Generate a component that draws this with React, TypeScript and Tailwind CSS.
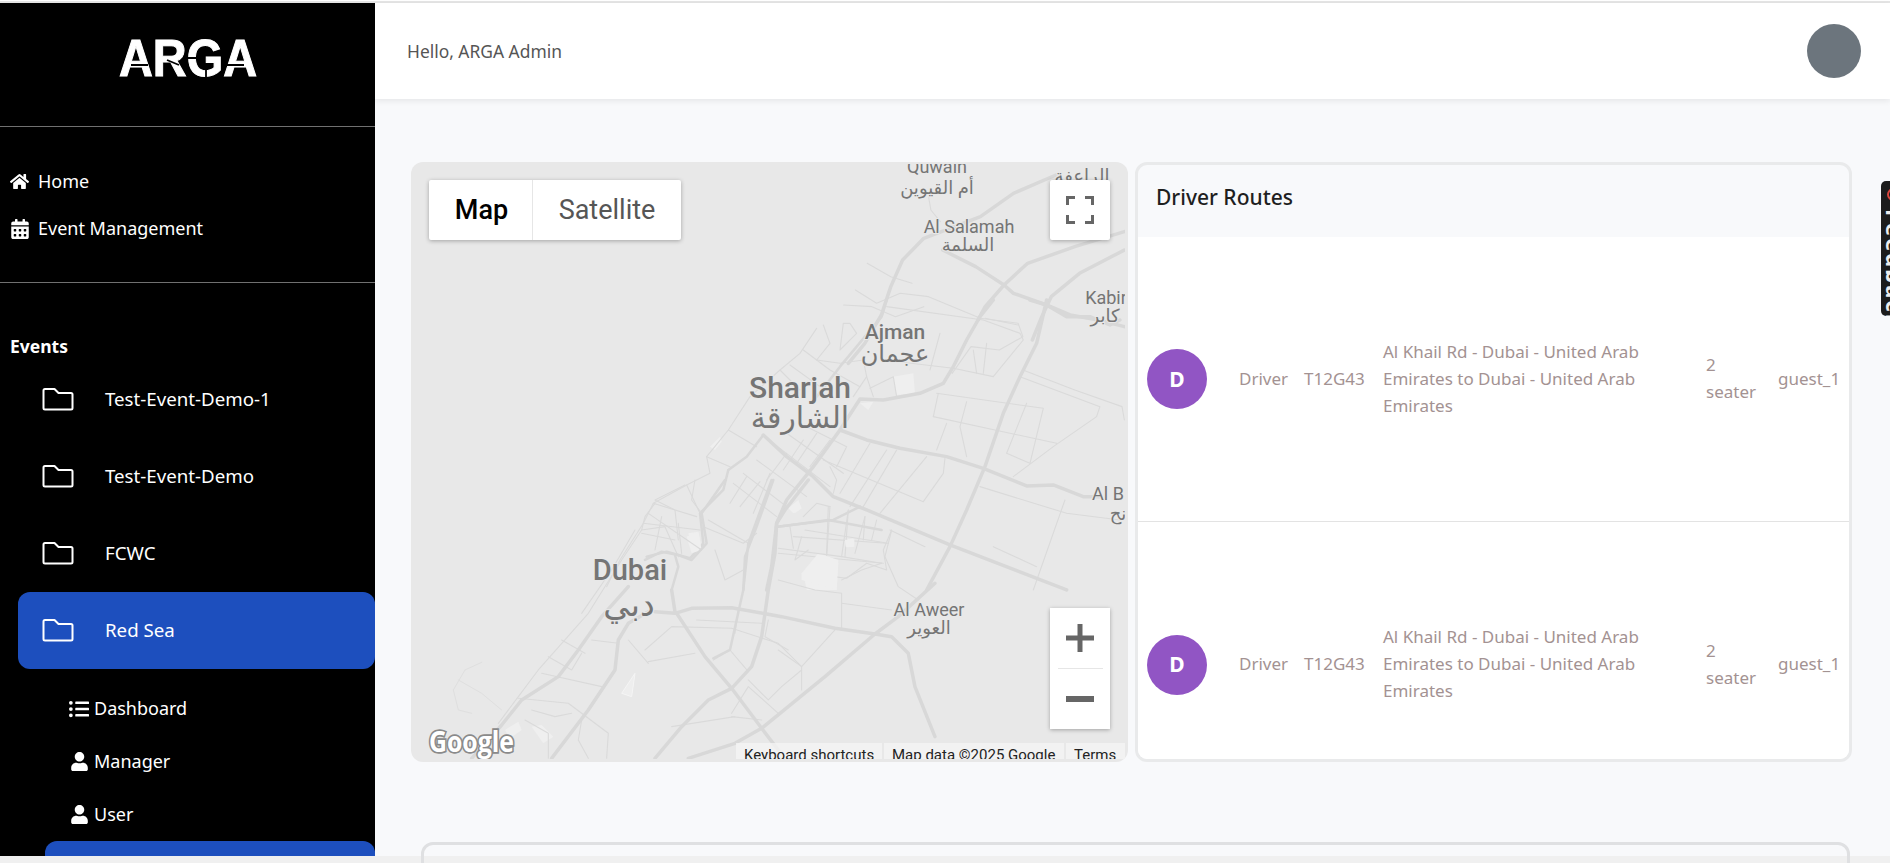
import React from "react";
import { FaHome, FaCalendarAlt, FaListUl, FaUser } from "react-icons/fa";

const Folder = () => (
  <svg width="32" height="24" viewBox="0 0 32 24" fill="none" className="shrink-0">
    <path d="M3 2h9.5l4 4H29a1.5 1.5 0 0 1 1.500 1.500V21a1.500 1.500 0 0 1-1.500 1.500H3A1.500 1.500 0 0 1 1.500 21V3.500A1.500 1.500 0 0 1 3 2z" stroke="#fff" strokeWidth="2" strokeLinejoin="round" />
  </svg>
);

const pts = (a: number[][]) => a.map((p) => p.join(",")).join(" ");

const outerA: number[][][] = [
  [[1390,75],[1300,130],[1230,200],[1110,265],[1065,330],[1040,410],[1020,495],[985,580],[950,640]],
  [[1150,300],[1220,350],[1280,405],[1300,430],[1370,465],[1420,495],[1480,510],[1535,530]],
  [[1535,245],[1430,290],[1330,340],[1280,405],[1240,470],[1225,510]],
  [[1535,300],[1440,370],[1380,440],[1360,500],[1340,570]],
];
const outerThin: number[][][] = [
  [[1120,140],[1125,180],[1145,215]],
  [[990,340],[1040,380],[1085,400]],
  [[965,420],[1010,460],[1060,430],[1120,440],[1230,505],[1310,520],[1320,560],[1270,600],[1210,590],[1170,670]],
  [[940,465],[1000,470],[1050,500],[1110,470]],
  [[1240,505],[1310,525]],
  [[1320,660],[1430,720],[1530,770],[1535,810]],
];
const g8major: number[][][] = [
  [[1340,0],[1310,130],[1260,230],[1210,340],[1155,500],[1100,630],[1050,740],[980,870]],
  [[1180,0],[1140,50],[1100,120],[1060,200],[1030,250],[960,280],[850,300],[780,297],[720,390],[640,500],[560,600],[530,670],[515,800],[500,870]],
  [[720,390],[800,420],[900,445],[1040,470],[1150,505],[1280,558],[1360,555],[1450,590],[1500,590]],
  [[490,405],[560,470],[640,530],[700,590],[800,630],[1050,735],[1400,870]],
  [[1290,0],[1340,15],[1400,50],[1470,50],[1530,75],[1560,60]],
];
const g8mid: number[][][] = [
  [[860,0],[845,50],[770,140],[720,200],[650,290]],
  [[520,540],[470,680],[435,770],[430,870]],
  [[385,510],[370,570],[300,640],[310,730],[270,775],[200,755],[140,770]],
  [[385,510],[440,470],[490,405]],
  [[530,680],[700,660],[780,620]],
];
const g8thin: number[][][] = [
  [[650,85],[600,160],[540,210],[450,290],[385,390],[320,470],[330,520],[260,555],[160,610],[130,670],[60,780],[20,860]],
  [[670,75],[690,130],[650,180],[720,190],[790,180],[800,230],[760,290]],
  [[730,70],[720,150],[770,100],[750,70],[730,70]],
  [[610,150],[690,210],[780,260]],
  [[570,195],[660,260]],
  [[540,210],[600,270]],
  [[385,390],[470,440]],
  [[320,470],[390,500]],
  [[260,555],[300,640]],
  [[160,610],[290,650]],
  [[130,670],[300,690]],
  [[310,680],[430,730],[470,700]],
  [[400,550],[530,650]],
  [[430,520],[560,620]],
  [[470,480],[620,590]],
  [[520,430],[690,560]],
  [[560,400],[730,520]],
  [[620,380],[740,440],[710,500]],
  [[440,530],[390,610]],
  [[480,545],[420,620]],
  [[510,520],[460,640]],
  [[560,460],[500,540]],
  [[610,420],[550,510]],
  [[650,400],[590,490]],
  [[690,420],[630,500]],
  [[690,500],[710,540],[700,580]],
  [[810,430],[720,580]],
  [[860,450],[750,620]],
  [[890,450],[790,620]],
  [[980,470],[840,640]],
  [[1035,475],[1030,520],[970,605]],
  [[670,480],[970,605]],
  [[570,680],[580,745]],
  [[690,620],[680,770]],
  [[745,630],[735,770]],
  [[795,650],[790,720]],
  [[830,660],[815,720]],
  [[580,710],[860,730]],
  [[535,760],[850,790]],
  [[610,650],[650,610],[690,620]],
  [[875,690],[850,750],[860,810],[800,790],[740,835],[700,830]],
  [[870,690],[975,740]],
  [[800,230],[820,290]],
  [[810,265],[880,230],[890,290]],
  [[1020,100],[990,210]],
  [[860,20],[1150,60],[1260,100],[1270,120],[1180,230],[1060,205],[850,180]],
  [[1120,150],[1130,220]],
  [[1160,130],[1150,220]],
  [[1010,280],[1330,325],[1290,490]],
  [[1100,305],[1080,380],[1100,470]],
  [[1000,350],[1370,430]],
  [[1015,280],[1000,350]],
  [[1280,310],[1220,460],[1290,490]],
  [[1260,230],[1500,320],[1490,350],[1360,440],[1240,530]],
  [[1140,560],[1400,640],[1560,660]],
  [[1395,600],[1300,870]],
  [[1180,740],[1310,800]],
  [[1040,370],[1010,450]],
];
const g9major: number[][][] = [
  [[1180,0],[1110,90],[1085,130],[1080,220],[1060,330],[1040,470],[1010,560],[950,625],[880,660],[800,740],[720,835]],
  [[720,395],[780,400],[830,385],[950,383],[1100,410],[1260,445],[1380,462],[1430,470],[1480,520],[1500,620],[1560,770]],
  [[785,400],[870,530],[950,625],[1040,745],[1090,810]],
  [[770,330],[780,395]],
  [[700,395],[640,430],[610,480],[600,570],[520,690],[410,835]],
  [[640,320],[560,410],[490,510],[430,590],[320,660],[260,735],[170,835]],
  [[1560,310],[1450,410],[1380,462],[1230,590],[1040,745],[960,790],[820,835]],
];
const g9mid: number[][][] = [
  [[1070,0],[1000,190],[985,330],[945,510],[895,535]],
  [[930,0],[860,100],[875,190],[830,240],[790,225],[740,215],[690,240]],
  [[770,330],[790,260],[780,225]],
  [[1090,140],[1240,120],[1400,150]],
];
const g9thin: number[][][] = [
  [[680,150],[620,240],[520,400],[370,570],[310,650],[250,730]],
  [[660,150],[590,270],[500,400]],
  [[720,70],[690,110],[680,150],[750,140],[790,230]],
  [[810,15],[720,60],[780,90],[790,180]],
  [[840,0],[830,60],[860,100]],
  [[700,100],[860,210]],
  [[680,160],[780,180]],
  [[740,110],[720,210]],
  [[790,130],[800,220]],
  [[440,480],[510,520]],
  [[400,530],[470,570],[500,520]],
  [[380,580],[560,620]],
  [[310,655],[460,670],[580,760],[575,835]],
  [[350,690],[420,710],[470,700]],
  [[330,720],[400,760],[400,835]],
  [[500,720],[490,780],[520,835]],
  [[530,480],[610,490]],
  [[640,480],[700,550]],
  [[690,510],[770,440],[950,445],[1090,490],[1160,560],[1160,630]],
  [[700,545],[840,520]],
  [[845,420],[1040,430]],
  [[970,390],[960,460]],
  [[1060,420],[1050,470],[1120,510]],
  [[895,540],[945,510],[1000,575]],
  [[1090,510],[1160,560],[1260,450]],
  [[1090,300],[1200,330],[1280,340],[1280,450]],
  [[1280,370],[1430,390]],
  [[1090,205],[1280,230],[1400,250]],
  [[1160,170],[1140,240],[1180,210]],
  [[1240,80],[1235,220]],
  [[1300,90],[1280,230]],
  [[1350,110],[1320,220]],
  [[1170,150],[1420,190]],
  [[1430,150],[1410,230],[1450,320],[1510,360]],
  [[1280,300],[1340,270],[1400,250]],
  [[880,120],[1000,190]],
  [[900,210],[930,300],[985,270]],
  [[1090,700],[1000,620],[950,700]],
  [[950,710],[1040,720]],
  [[1000,600],[1060,660],[1100,620],[1160,570]],
  [[770,740],[960,710]],
];
const g9faint: number[][][] = [
  [[200,547],[150,570],[115,630],[130,690],[170,700]],
  [[130,600],[200,640],[260,690]],
];

const Lines = ({ set, w, c }: { set: number[][][]; w: number; c: string }) => (
  <>
    {set.map((s, i) => (
      <polyline key={i} points={pts(s)} fill="none" stroke={c} strokeWidth={w} strokeLinejoin="round" strokeLinecap="round" vectorEffect="non-scaling-stroke" />
    ))}
  </>
);

const roboto = "Roboto, 'DejaVu Sans', sans-serif";

const Label = ({ x, y, size, weight = 400, fill = "#757575", children }: { x: number; y: number; size: number; weight?: number; fill?: string; children: React.ReactNode }) => (
  <text x={x} y={y} fontSize={size} fontWeight={weight} fontFamily={roboto} fill={fill} textAnchor="middle" dominantBaseline="central" stroke="#e8e8e8" strokeWidth="2" paintOrder="stroke">
    {children}
  </text>
);

const MapDrawing = () => (
  <svg viewBox="411 162 717 600" width="717" height="600" className="absolute left-0 top-0">
    <defs>
      <clipPath id="tile"><rect x="411" y="164" width="714" height="595" /></clipPath>
    </defs>
    <g clipPath="url(#tile)">
      <g transform="translate(600 300) scale(0.3333)">
        <polygon points="880,230 940,220 945,280 890,285" fill="#efefef" />
        <polygon points="330,440 360,410 365,425 345,450" fill="#efefef" />
        <polygon points="780,310 820,305 805,330" fill="#efefef" />
        <polygon points="570,625 590,605 605,625 585,640" fill="#efefef" />
        <polygon points="735,720 760,715 762,740 738,742" fill="#efefef" />
        <polygon points="610,820 650,770 715,790 710,870 620,870" fill="#efefef" />
        <polygon points="265,700 295,695 305,745 280,760" fill="#efefef" />
      </g>
      <g transform="translate(400 150) scale(0.4719 0.3333)">
        <Lines set={outerThin} w={1.1} c="#dadada" />
        <Lines set={outerA} w={3.5} c="#d8d8d8" />
      </g>
      <g transform="translate(600 300) scale(0.3333)">
        <Lines set={g8thin} w={1.1} c="#dadada" />
        <Lines set={g8mid} w={2.5} c="#d8d8d8" />
        <Lines set={g8major} w={3.5} c="#d8d8d8" />
      </g>
      <g transform="translate(415 480) scale(0.3333)">
        <polygon points="1160,280 1210,220 1270,240 1265,330 1160,300" fill="#efefef" />
        <polygon points="815,170 850,155 860,210 830,220" fill="#efefef" />
        <polygon points="1120,85 1150,60 1160,85 1135,100" fill="#efefef" />
        <polygon points="1290,180 1318,178 1318,200 1292,200" fill="#efefef" />
        <polygon points="270,750 310,725 320,750 285,775" fill="#efefef" />
        <polygon points="350,740 380,735 415,770 385,790" fill="#efefef" />
        <Lines set={g9faint} w={1} c="#dfdfdf" />
        <path d="M620 640 L660 580 L650 650 Z" fill="#eeeeee" stroke="#f5f5f5" vectorEffect="non-scaling-stroke" />
        <Lines set={g9thin} w={1.1} c="#dadada" />
        <Lines set={g9mid} w={2.5} c="#d8d8d8" />
        <Lines set={g9major} w={3.5} c="#d8d8d8" />
      </g>
      <Label x={937} y={166} size={18}>Quwain</Label>
      <Label x={937} y={187} size={18}>أم القيوين</Label>
      <Label x={1082} y={175} size={18}>الراعفة</Label>
      <Label x={969} y={226} size={18}>Al Salamah</Label>
      <Label x={968} y={244} size={18}>السلمة</Label>
      <Label x={1106} y={297} size={18}>Kabir</Label>
      <Label x={1105} y={315} size={18}>كابر</Label>
      <Label x={895} y={332} size={21} weight={500}>Ajman</Label>
      <Label x={895} y={354} size={24}>عجمان</Label>
      <Label x={800} y={387} size={30} weight={500}>Sharjah</Label>
      <Label x={800} y={417} size={30}>الشارقة</Label>
      <Label x={630} y={570} size={29} weight={500}>Dubai</Label>
      <Label x={629} y={604} size={33}>دبي</Label>
      <Label x={929} y={609} size={18}>Al Aweer</Label>
      <Label x={929} y={627} size={18}>العوير</Label>
      <Label x={1108} y={493} size={18}>Al B</Label>
      <Label x={1118} y={513} size={18}>نح</Label>
      <text x="429" y="752" fontSize="28" fontWeight="700" fontFamily="'Open Sans', sans-serif" fill="#ffffff" stroke="#8a8a8a" strokeWidth="3.5" textLength="85" lengthAdjust="spacingAndGlyphs" paintOrder="stroke">Google</text>
    </g>
  </svg>
);

const SubItem = ({ icon, label }: { icon: React.ReactNode; label: string }) => (
  <div className="flex h-[53px] items-center pl-[69px] text-white">
    <span className="flex w-[20px] justify-center">{icon}</span>
    <span className="ml-[5px]">{label}</span>
  </div>
);

const EventRow = ({ label, active }: { label: string; active?: boolean }) => (
  <div className={`ml-[18px] flex h-[77px] items-center rounded-[12px] pb-px pl-[24px] ${active ? "bg-[#1d4fbe]" : ""}`}>
    <Folder />
    <span className="ml-[31px] text-[18.700px] text-white">{label}</span>
  </div>
);

const Route = ({ border }: { border?: boolean }) => (
  <div className={`flex h-[285px] shrink-0 items-center bg-white pl-[9px] text-[17px] leading-[27px] text-[#a39292] ${border ? "border-b border-[#e3e3e3]" : ""}`}>
    <div className="flex h-[60px] w-[60px] shrink-0 items-center justify-center rounded-full bg-[#9155c4] text-[21px] font-bold text-white">D</div>
    <div className="mb-[2px] ml-[32px] w-[65px] shrink-0">Driver</div>
    <div className="mb-[2px] w-[79px] shrink-0">T12G43</div>
    <div className="mb-[2px] mr-[33px] w-[290px] shrink-0">Al Khail Rd - Dubai - United Arab Emirates to Dubai - United Arab Emirates</div>
    <div className="mb-[2px] mr-[20px] w-[52px] shrink-0">2 seater</div>
    <div className="mb-[2px]">guest_1</div>
  </div>
);

export default function App() {
  return (
    <div className="flex h-[863px] w-[1890px] flex-col overflow-hidden bg-[#f0f0f0] font-['Noto_Sans',sans-serif] text-[16px]">
      <div className="h-[3px] shrink-0 border-t border-b-2 border-t-white border-b-[#e5e5e5] bg-white" />
      <div className="flex h-[853px] shrink-0">
        <aside className="h-full w-[375px] shrink-0 overflow-hidden bg-black text-[18px] text-white">
          <div className="flex h-[124px] items-center justify-center border-b border-[#707070] pb-[12px]">
            <svg width="140" height="40" viewBox="0 0 140 40">
              <text x="1" y="37" fontSize="51" fontWeight="700" fontFamily="'Liberation Sans', sans-serif" fill="#fff" stroke="#fff" strokeWidth="1" textLength="138" lengthAdjust="spacingAndGlyphs">ARGA</text>
              <path d="M13 26 H30 M49 21 L61 26 M66 19 H78 M88 28 V38 M108 26 H126" stroke="#000" strokeWidth="1.800" />
            </svg>
          </div>
          <div className="h-[156px] border-b border-[#707070] pl-[10px] pt-[31px]">
            <div className="flex h-[47px] items-center gap-[9px]">
              <FaHome size={19} />
              <span>Home</span>
            </div>
            <div className="flex h-[47px] items-center gap-[8px]">
              <FaCalendarAlt size={20} />
              <span>Event Management</span>
            </div>
          </div>
          <div className="flex h-[78px] items-end pb-[3px] pl-[10px] font-bold leading-[24px]">
            <span className="text-[17.500px]">Events</span>
          </div>
          <EventRow label="Test-Event-Demo-1" />
          <EventRow label="Test-Event-Demo" />
          <EventRow label="FCWC" />
          <EventRow label="Red Sea" active />
          <div className="mt-[13px]">
            <SubItem icon={<FaListUl size={20} />} label="Dashboard" />
            <SubItem icon={<FaUser size={19} />} label="Manager" />
            <SubItem icon={<FaUser size={19} />} label="User" />
          </div>
          <div className="ml-[45px] h-[40px] rounded-t-[12px] bg-[#1d4fbe]" />
        </aside>
        <main className="relative min-w-0 flex-1 bg-[#f8f9fb]">
          <header className="flex h-[96px] items-center justify-between bg-white pl-[32px] pr-[29px] shadow-[0_2px_6px_rgba(0,0,0,0.08)]">
            <span className="text-[17.400px] text-[#555]">Hello, ARGA Admin</span>
            <div className="h-[54px] w-[54px] rounded-full bg-[#6c757d]" />
          </header>
          <div className="ml-[36px] mt-[63px] flex h-[600px] gap-[7px]">
            <div className="relative h-[600px] w-[717px] overflow-hidden rounded-[12px] bg-[#e8e8e8] font-['Roboto',sans-serif]">
              <MapDrawing />
              <div className="absolute left-[18px] top-[18px] flex h-[60px] w-[252px] rounded-[2px] bg-white text-[27px] shadow-[0_1px_4px_rgba(0,0,0,0.3)]">
                <div className="flex w-[104px] items-center justify-center border-r border-[#e6e6e6] pl-[2px] font-medium text-black">Map</div>
                <div className="flex flex-1 items-center justify-center text-[#565656]">Satellite</div>
              </div>
              <div className="absolute left-[639px] top-[18px] flex h-[60px] w-[60px] items-center justify-center rounded-[2px] bg-white shadow-[0_1px_4px_rgba(0,0,0,0.3)]">
                <svg width="28" height="28" viewBox="0 0 28 28" fill="#666">
                  <path d="M0 0h9v3H3v6H0zM19 0h9v9h-3V3h-6zM0 19h3v6h6v3H0zM25 19h3v9h-9v-3h6z" />
                </svg>
              </div>
              <div className="absolute left-[639px] top-[446px] flex h-[121px] w-[60px] flex-col items-center bg-white shadow-[0_1px_4px_rgba(0,0,0,0.3)]">
                <div className="flex h-[60px] items-center justify-center">
                  <svg width="28" height="28" viewBox="0 0 28 28" fill="#666"><path d="M11.500 0h5v11.500H28v5H16.500V28h-5V16.500H0v-5h11.500z" /></svg>
                </div>
                <div className="h-px w-[45px] bg-[#e6e6e6]" />
                <div className="flex h-[60px] items-center justify-center">
                  <svg width="28" height="6" viewBox="0 0 28 6" fill="#666"><rect width="28" height="6" /></svg>
                </div>
              </div>
              <div className="absolute bottom-[3px] left-[325px] flex h-[16px] items-start gap-[2px] overflow-hidden text-[15px] leading-[25px] text-[#222]">
                <span className="w-[146px] bg-[#f4f4f4]/80 pl-[8px]">Keyboard shortcuts</span>
                <span className="w-[180px] bg-[#f4f4f4]/80 pl-[8px]">Map data ©2025 Google</span>
                <span className="w-[59px] bg-[#f4f4f4]/80 pl-[8px]">Terms</span>
              </div>
            </div>
            <div className="flex h-[600px] w-[717px] flex-col overflow-hidden rounded-[12px] border-[3px] border-[#e9eaeb]">
              <div className="flex h-[72px] shrink-0 items-center pb-[6px] pl-[18px] text-[21px] font-medium text-[#1f1f1f]">Driver Routes</div>
              <Route border />
              <Route />
            </div>
          </div>
          <div className="ml-[46px] mt-[80px] h-[40px] w-[1429px] rounded-t-[12px] border-[3px] border-[#dfe0e2]" />
          <div className="absolute right-0 top-[178px] flex h-[135px] w-[9px] flex-col items-start overflow-hidden rounded-l-[5px] bg-[#1c1c1c] pl-[6px] pt-[7px]">
            <span className="h-[13px] w-[13px] shrink-0 rounded-full border-2 border-[#d9453d]" />
            <span className="-ml-[3px] mt-[8px] text-[22px] font-bold leading-[22px] tracking-[2px] text-[#eee] [writing-mode:vertical-rl]">Feedback</span>
          </div>
        </main>
      </div>
    </div>
  );
}
